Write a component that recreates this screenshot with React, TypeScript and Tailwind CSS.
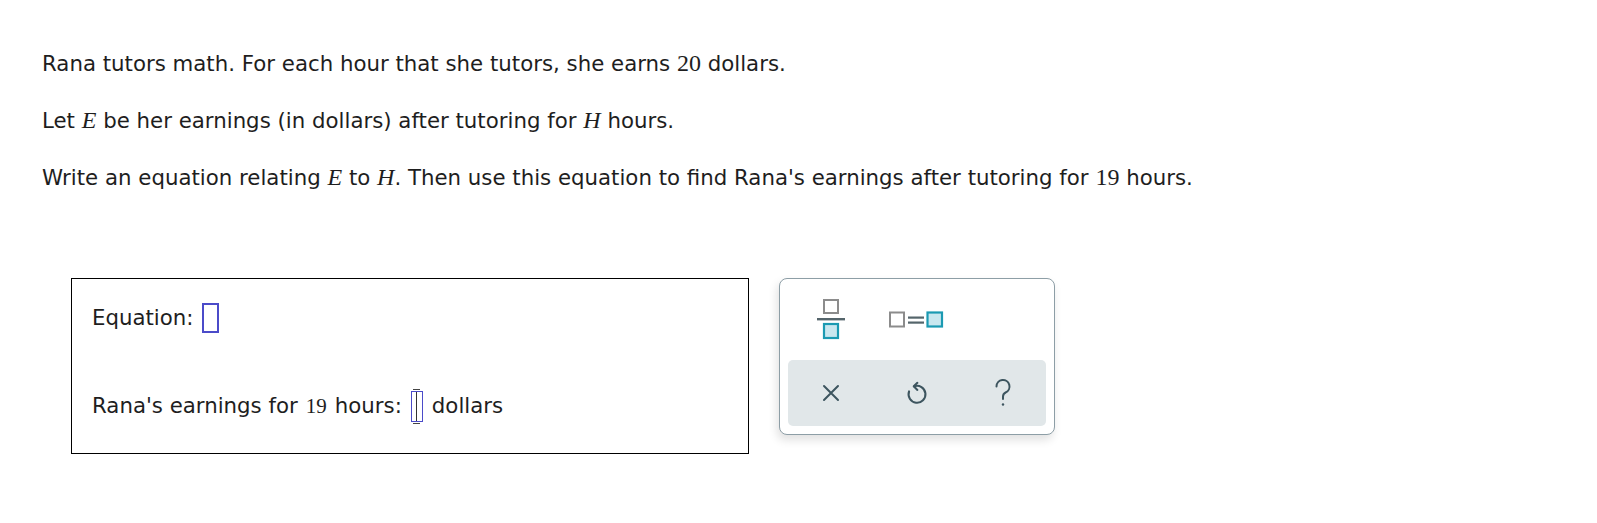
import React from "react";

const M = ({ children, italic }: { children: React.ReactNode; italic?: boolean }) => (
  <span className={`font-['Liberation_Serif',serif] text-[24px] ${italic ? "italic" : ""}`}>{children}</span>
);

const FractionIcon = () => (
  <svg width="28" height="42" viewBox="0 0 28 42">
    <rect x="7" y="1" width="14" height="13" fill="#fff" stroke="#8c8c8c" strokeWidth="2" />
    <rect x="0" y="19" width="28" height="2.4" fill="#55656b" />
    <rect x="7" y="25" width="14" height="14" fill="#c9e7ef" stroke="#1b9ab2" strokeWidth="2.2" />
  </svg>
);

const EqualsIcon = () => (
  <svg width="56" height="18" viewBox="0 0 56 18">
    <rect x="1" y="1.5" width="14" height="14" fill="#fff" stroke="#8c8c8c" strokeWidth="2" />
    <rect x="19" y="5.5" width="16" height="2.2" fill="#55656b" />
    <rect x="19" y="10.5" width="16" height="2.2" fill="#55656b" />
    <rect x="38.5" y="1.5" width="14.5" height="14" fill="#c9e7ef" stroke="#1b9ab2" strokeWidth="2.2" />
  </svg>
);

const CloseIcon = () => (
  <svg width="18" height="18" viewBox="0 0 18 18" fill="none" stroke="#3d555f" strokeWidth="2" strokeLinecap="round">
    <path d="M2 2 L16 16 M16 2 L2 16" />
  </svg>
);

const UndoIcon = () => (
  <svg width="26" height="26" viewBox="0 0 20 20" fill="none" stroke="#3d555f" strokeWidth="1.6" strokeLinecap="round" strokeLinejoin="round">
    <path d="M7.8 4.9 A6.5 6.5 0 1 1 3.9 8.8" />
    <path d="M10.3 2.2 L7.5 4.9 L10.3 7.6" />
  </svg>
);

const HelpIcon = () => (
  <svg width="20" height="30" viewBox="0 0 20 30" fill="none" stroke="#3d555f" strokeWidth="2" strokeLinecap="round">
    <path d="M3.5 8.5 A6.5 6.5 0 1 1 12.6 14.5 C10.8 15.4 10 16.8 10 18.8 V21" />
    <circle cx="10" cy="26.5" r="1.2" fill="#3d555f" stroke="none" />
  </svg>
);

const AnswerBox = ({ narrow }: { narrow?: boolean }) =>
  narrow ? (
    <span className="relative inline-flex w-[12px] h-[31px] border-[1.5px] border-[#4b4bc9] justify-center align-middle">
      <span className="w-px h-full bg-[#333]" />
      <span className="absolute -top-[3px] w-[7px] h-[3px] border-t border-[#444]" />
      <span className="absolute -bottom-[3px] w-[7px] h-[3px] border-b border-[#444]" />
    </span>
  ) : (
    <span className="inline-block w-[17px] h-[30px] border-2 border-[#4b4bc9] align-middle" />
  );

export default function App() {
  return (
    <div className="min-h-screen bg-white pt-[51px] pl-[42px] text-[21.3px] leading-[24px] text-[#1e1e1e] font-['DejaVu_Sans',Verdana,sans-serif]">
      <p>
        Rana tutors math. For each hour that she tutors, she earns <M>20</M> dollars.
      </p>
      <p className="mt-[32px]">
        Let <M italic>E</M> be her earnings (in dollars) after tutoring for <M italic>H</M> hours.
      </p>
      <p className="mt-[32px]">
        Write an equation relating <M italic>E</M> to <M italic>H</M>. Then use this equation to find Rana's earnings after tutoring for <M>19</M> hours.
      </p>

      <div className="flex items-start gap-[30px] mt-[88px] ml-[29px]">
        <div className="w-[678px] h-[176px] border border-black pl-[20px] pt-[23px] flex flex-col gap-[56px]">
          <div className="flex items-center gap-[8px] h-[32px]">
            <span>Equation:</span>
            <AnswerBox />
          </div>
          <div className="flex items-center h-[32px]">
            <span>Rana's earnings for</span>
            <span className="ml-[8px] font-['Liberation_Serif',serif] text-[21px]">19</span>
            <span className="ml-[8px]">hours:</span>
            <span className="ml-[9px] flex items-center">
              <AnswerBox narrow />
            </span>
            <span className="ml-[9px]">dollars</span>
          </div>
        </div>

        <div className="w-[276px] h-[157px] border border-[#8d9ea6] rounded-[8px] bg-white px-[8px] pb-[8px] shadow-[-2px_5px_10px_rgba(0,0,0,0.12)] flex flex-col">
          <div className="grid grid-cols-3 h-[81px] items-center justify-items-center">
            <div className="pt-[1px]">
              <FractionIcon />
            </div>
            <EqualsIcon />
            <div />
          </div>
          <div className="flex-1 grid grid-cols-3 items-center justify-items-center bg-[#e1e7e9] rounded-[5px]">
            <CloseIcon />
            <UndoIcon />
            <HelpIcon />
          </div>
        </div>
      </div>
    </div>
  );
}
